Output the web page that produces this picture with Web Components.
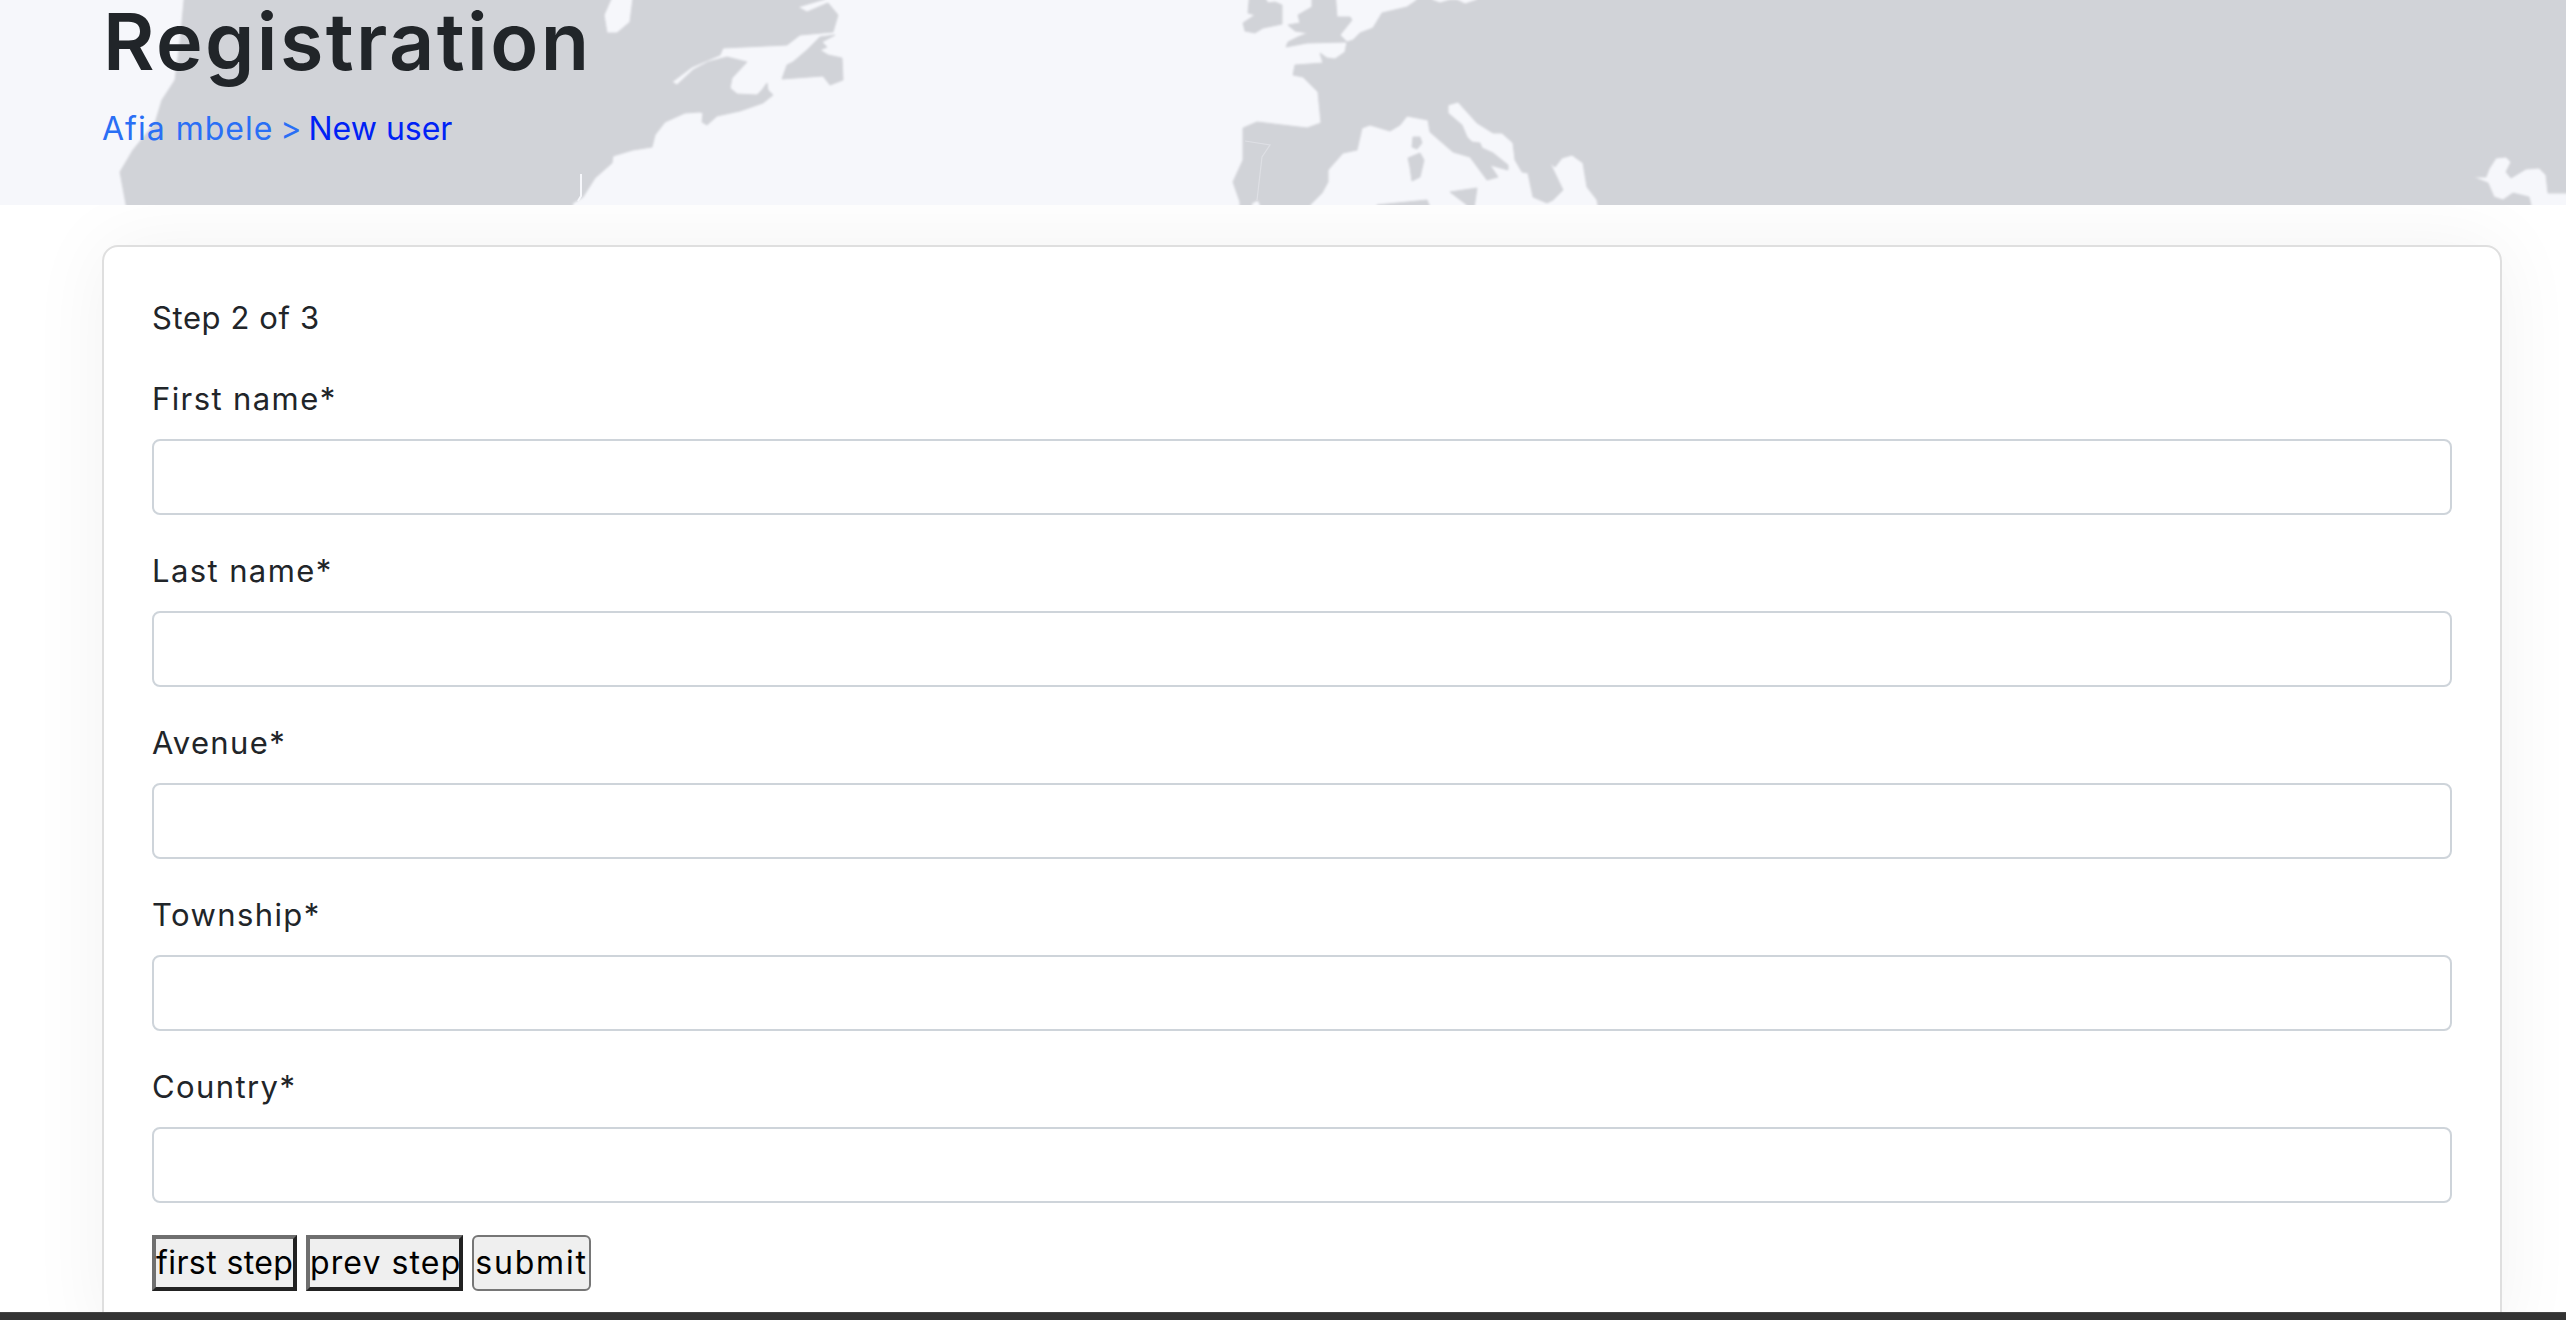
<!doctype html>
<html lang="en">
<head>
<meta charset="utf-8">
<title>Registration</title>
<style>
  html, body { margin: 0; height: 100%; overflow: hidden; background: #fff; }
  body {
    display: flex;
    flex-direction: column;
    height: 1320px;
    font-family: Inter, "Liberation Sans", sans-serif;
    color: #212529;
  }
  reg-main { flex: 1; min-height: 0; }
</style>
</head>
<body>
<page-hero heading="Registration">
  <a slot="crumbs" class="from">Afia mbele</a>
  <a slot="crumbs" class="sep">&gt;</a>
  <a slot="crumbs" class="to">New user</a>
</page-hero>
<reg-main>
  <form-card step="Step 2 of 3">
    <form-field label="First name*"></form-field>
    <form-field label="Last name*"></form-field>
    <form-field label="Avenue*"></form-field>
    <form-field label="Township*"></form-field>
    <form-field label="Country*"></form-field>
    <step-buttons></step-buttons>
  </form-card>
</reg-main>
<page-footer></page-footer>

<script>
const heroTemplate = document.createElement("template");
heroTemplate.innerHTML = `
  <style>
    :host {
      display: block;
      position: relative;
      height: 205px;
      overflow: hidden;
      background: #f6f7fb;
    }
    svg { position: absolute; left: 0; top: 0; width: 2566px; height: 205px; overflow: visible; }
    .map { fill: #d1d3d8; stroke: #d1d3d8; stroke-width: 1; stroke-linejoin: round; }
    .inner {
      position: relative;
      padding-left: 102px;
      display: flex;
      flex-direction: column;
      gap: 23px;
    }
    h1 {
      margin: 0 0 0 1px;
      font-size: 79px;
      line-height: 82px;
      font-weight: 600;
      letter-spacing: 2.4px;
      color: #212529;
    }
    nav {
      display: flex;
      gap: 7px;
      font-size: 32px;
      line-height: 48px;
    }
    ::slotted(.from) { color: #2a6ff5; letter-spacing: 1px; }
    ::slotted(.sep) { color: #2a6ff5; }
    ::slotted(.to) { color: #0022f5; }
  </style>
  <svg viewBox="0 0 2566 205" aria-hidden="true">
    <defs>
      <filter id="soft" x="-1%" y="-20%" width="102%" height="140%">
        <feGaussianBlur stdDeviation="0.9"/>
      </filter>
    </defs>
    <g class="map" filter="url(#soft)">
      <path d="M185 -10 L180 43 L175 80 L162 100 L155 123 L133 150 L120 172 L128 215 L570 215 L573 203 L583 197 L595 178 L612 163 L613 156 L633 150 L652 147 L655 135 L665 122 L685 113 L700 112 L703 113 L702 122 L707 125 L717 116 L740 111 L763 103 L773 95 L768 90 L767 83 L762 90 L757 95 L737 94 L730 88 L732 78 L747 62 L727 57 L708 62 L693 70 L677 85 L672 82 L692 67 L720 55 L723 48 L787 45 L800 35 L833 32 L838 15 L828 3 L807 12 L798 7 L825 -1 L825 -10 L634 -10 L630 22 L617 33 L607 33 L604 15 L615 -10 Z"/>
      <path d="M835 35 L820 37 L807 50 L793 62 L787 65 L782 79 L823 76 L830 85 L843 80 L842 58 L828 55 L820 50 L827 47 L822 42 Z"/>
      <path d="M1250 -10 L1248 13 L1255 15 L1243 23 L1245 31 L1255 33 L1263 28 L1282 24 L1282 5 L1275 2 L1268 3 L1260 -10 Z"/>
      <path d="M1312 -10 L1312 7 L1298 15 L1300 23 L1288 25 L1295 31 L1308 33 L1298 37 L1288 42 L1286 47 L1307 43 L1347 42 L1340 35 L1352 20 L1350 17 L1337 17 L1335 -10 Z"/>
      <path d="M1417 -10 L1417 0 L1407 7 L1382 13 L1373 28 L1360 33 L1353 40 L1347 42 L1345 52 L1335 59 L1327 58 L1320 53 L1323 63 L1295 65 L1293 75 L1303 77 L1318 92 L1321 123 L1307 128 L1257 122 L1243 128 L1243 140 L1243 160 L1233 182 L1240 202 L1240 215 L1250 215 L1252 203 L1258 200 L1265 215 L1310 215 L1310 205 L1322 193 L1328 182 L1328 170 L1343 153 L1357 150 L1362 128 L1370 125 L1390 131 L1400 125 L1407 116 L1428 120 L1430 132 L1453 152 L1470 157 L1487 180 L1498 177 L1490 165 L1508 170 L1508 165 L1493 153 L1482 148 L1480 143 L1472 142 L1467 137 L1462 125 L1448 113 L1448 105 L1458 102 L1477 123 L1493 133 L1502 133 L1513 143 L1515 160 L1522 172 L1528 173 L1533 197 L1547 203 L1553 200 L1563 190 L1550 163 L1555 167 L1562 158 L1572 155 L1583 163 L1587 187 L1597 200 L1600 215 L2531 215 L2531 205 L2529 197 L2513 193 L2503 200 L2494 197 L2488 183 L2473 177 L2486 177 L2489 169 L2496 158 L2506 157 L2511 162 L2506 172 L2511 178 L2516 175 L2526 169 L2539 168 L2546 175 L2548 193 L2576 193 L2576 -10 L1477 -10 L1477 0 L1465 4 L1457 0 L1450 0 L1440 3 L1432 0 L1432 -10 Z"/>
      <path d="M1450 192 L1477 188 L1473 215 L1467 215 L1467 205 Z"/>
      <path d="M1377 215 L1377 205 L1427 200 L1433 215 Z"/>
      <path d="M1413 137 L1420 137 L1422 143 L1417 149 L1412 147 Z"/>
      <path d="M1408 158 L1420 153 L1424 160 L1420 177 L1412 181 L1410 167 Z"/>
    </g>
    <path d="M1245 141 L1270 145 L1262 157 L1257 200" fill="none" stroke="#f6f7fb" stroke-opacity=".35" stroke-width="1.2"/>
    <path d="M581 174 L581 196 L578 201" fill="none" stroke="#f6f7fb" stroke-width="2"/>
  </svg>
  <div class="inner">
    <h1></h1>
    <nav><slot name="crumbs"></slot></nav>
  </div>
`;

class PageHero extends HTMLElement {
  constructor() {
    super();
    this.attachShadow({ mode: "open" });
  }
  connectedCallback() {
    this.shadowRoot.appendChild(heroTemplate.content.cloneNode(true));
    this.shadowRoot.querySelector("h1").textContent = this.getAttribute("heading");
  }
}
customElements.define("page-hero", PageHero);

class RegMain extends HTMLElement {
  constructor() {
    super();
    this.attachShadow({ mode: "open" }).innerHTML = `
      <style>
        :host { display: block; overflow: hidden; padding: 40px 64px 0 102px; }
      </style>
      <slot></slot>
    `;
  }
}
customElements.define("reg-main", RegMain);

const cardTemplate = document.createElement("template");
cardTemplate.innerHTML = `
  <style>
    :host {
      display: block;
      background: #fff;
      border: 2px solid #dfdfdf;
      border-radius: 16px;
      padding: 47px 48px 48px;
      box-shadow: 0 0 80px rgba(0, 0, 0, 0.055);
    }
    p {
      margin: 0 0 33px;
      font-size: 31px;
      line-height: 48px;
      letter-spacing: 0.6px;
      color: #212529;
    }
  </style>
  <p></p>
  <slot></slot>
`;

class FormCard extends HTMLElement {
  constructor() {
    super();
    this.attachShadow({ mode: "open" });
  }
  connectedCallback() {
    this.shadowRoot.appendChild(cardTemplate.content.cloneNode(true));
    this.shadowRoot.querySelector("p").textContent = this.getAttribute("step");
  }
}
customElements.define("form-card", FormCard);

const fieldTemplate = document.createElement("template");
fieldTemplate.innerHTML = `
  <style>
    :host { display: block; margin-bottom: 32px; }
    span {
      display: block;
      margin-bottom: 16px;
      font-size: 31px;
      line-height: 48px;
      letter-spacing: 1.4px;
      color: #212529;
    }
    input {
      display: block;
      box-sizing: border-box;
      width: 100%;
      height: 76px;
      padding: 0 24px;
      border: 2px solid #ced4da;
      border-radius: 8px;
      background: #fff;
      font: inherit;
      outline: none;
    }
  </style>
  <label><span></span><input type="text"></label>
`;

class FormField extends HTMLElement {
  constructor() {
    super();
    this.attachShadow({ mode: "open" });
  }
  connectedCallback() {
    this.shadowRoot.appendChild(fieldTemplate.content.cloneNode(true));
    this.shadowRoot.querySelector("span").textContent = this.getAttribute("label");
  }
}
customElements.define("form-field", FormField);

class StepButtons extends HTMLElement {
  constructor() {
    super();
    this.attachShadow({ mode: "open" }).innerHTML = `
      <style>
        :host { display: flex; gap: 9px; }
        button {
          box-sizing: border-box;
          height: 56px;
          padding: 0;
          background: #efefef;
          color: #000;
          font: 400 32px/48px Inter, "Liberation Sans", sans-serif;
          white-space: nowrap;
        }
        .pressed {
          border-width: 4px;
          border-style: solid;
          border-color: #6f6f6f #222 #222 #6f6f6f;
        }
        .first { width: 145px; letter-spacing: 0.4px; }
        .prev { width: 157px; letter-spacing: 1.1px; }
        .submit {
          width: 119px;
          border: 2px solid #767676;
          border-radius: 6px;
          letter-spacing: 1.8px;
        }
      </style>
      <button class="pressed first" type="button">first step</button>
      <button class="pressed prev" type="button">prev step</button>
      <button class="submit" type="submit">submit</button>
    `;
  }
}
customElements.define("step-buttons", StepButtons);

class PageFooter extends HTMLElement {
  constructor() {
    super();
    this.attachShadow({ mode: "open" }).innerHTML = `
      <style>
        :host { display: block; height: 8px; background: #333; border-top: 1px solid #444; box-sizing: border-box; }
      </style>
    `;
  }
}
customElements.define("page-footer", PageFooter);
</script>
</body>
</html>
